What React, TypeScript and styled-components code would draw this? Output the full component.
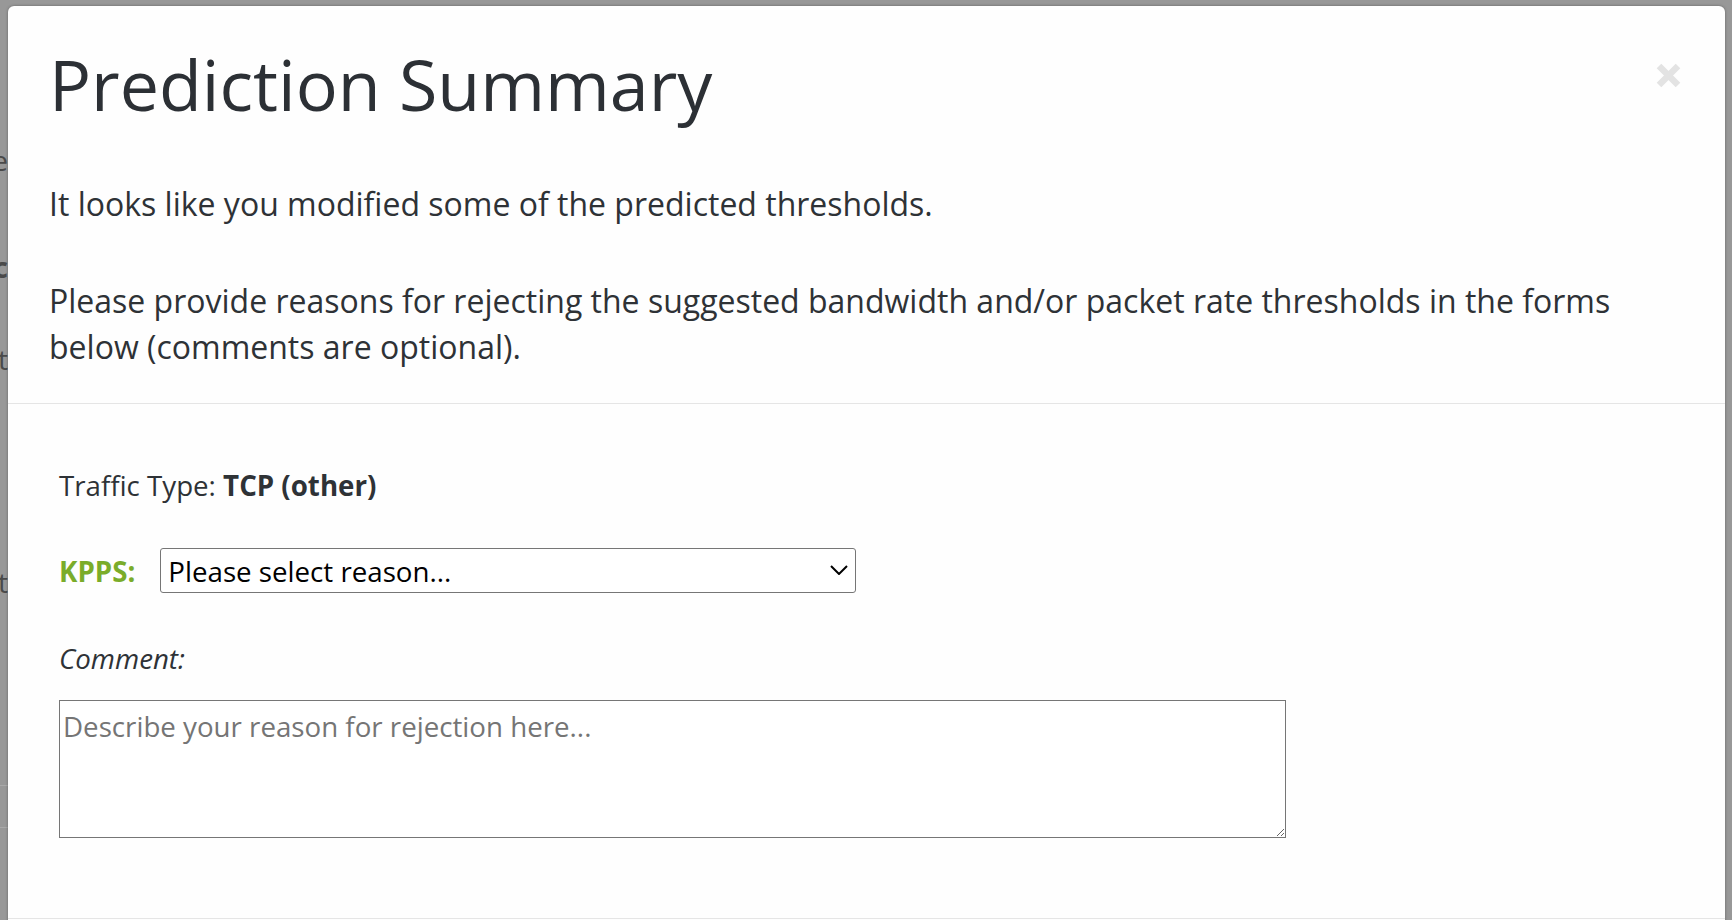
import React from "react";
import styled, { createGlobalStyle } from "styled-components";

const GlobalStyle = createGlobalStyle`
  html, body {
    margin: 0;
    padding: 0;
    height: 920px;
    overflow: hidden;
    background: #989898;
    font-family: "Open Sans", "Noto Sans", sans-serif;
  }
  * { box-sizing: border-box; }
`;

const Backdrop = styled.div`
  display: flex;
  align-items: flex-start;
  height: 920px;
  padding-top: 6px;
  background: #989898;
  overflow: hidden;
`;

const PageEdge = styled.div`
  width: 8px;
  flex: none;
  align-self: stretch;
  margin-top: -6px;
  display: flex;
  flex-direction: column;
  overflow: hidden;
  font-size: 28px;
  line-height: 40px;
  color: #4a4a4a;
`;

const EdgeGlyph = styled.div<{ $top: number; $bold?: boolean }>`
  margin-top: ${(p) => p.$top}px;
  height: 40px;
  white-space: nowrap;
  text-align: right;
  direction: rtl;
  font-weight: ${(p) => (p.$bold ? 700 : 400)};
`;

const EdgeRule = styled.div<{ $top: number }>`
  margin-top: ${(p) => p.$top}px;
  height: 1px;
  background: #a9a9a9;
`;

const Modal = styled.div`
  width: 1717px;
  flex: none;
  height: 930px;
  background: #fefefe;
  border-radius: 6px 6px 0 0;
  box-shadow: 0 0 3px rgba(0, 0, 0, 0.35);
  display: flex;
  flex-direction: column;
  color: #2e3236;
`;

const Header = styled.header`
  padding: 40px 42px 33.5px 41px;
  border-bottom: 1px solid #e5e5e5;
`;

const TitleRow = styled.div`
  display: flex;
  justify-content: space-between;
  align-items: flex-start;
`;

const Title = styled.h1`
  margin: 0;
  font-size: 70px;
  font-weight: 400;
  line-height: 1.1;
  color: #2c3035;
`;

const CloseButton = styled.button`
  border: 0;
  background: none;
  padding: 0;
  margin: 17px 2px 0 0;
  width: 25px;
  height: 25px;
  display: flex;
  cursor: pointer;
`;

const Intro = styled.p<{ $gap: number }>`
  margin: ${(p) => p.$gap}px 0 0 0;
  font-size: 32px;
  line-height: 46px;
`;

const Body = styled.section`
  padding: 61px 51px 80px 51px;
  display: flex;
  flex-direction: column;
  align-items: flex-start;
`;

const TypeLine = styled.div`
  font-size: 27.7px;
  line-height: 40px;
  strong { font-weight: 700; }
`;

const ReasonRow = styled.div`
  margin-top: 43px;
  display: flex;
  align-items: center;
  gap: 25px;
`;

const RateLabel = styled.label`
  font-size: 27.7px;
  line-height: 40px;
  font-weight: 700;
  color: #7aac2a;
`;

const SelectWrap = styled.div`
  position: relative;
  display: flex;
`;

const ReasonSelect = styled.select`
  appearance: none;
  -webkit-appearance: none;
  width: 696px;
  height: 45px;
  border: 1px solid #767676;
  border-radius: 3px;
  background: #fff;
  color: #000;
  font-family: "Open Sans", "Noto Sans", sans-serif;
  font-size: 27.7px;
  padding: 0 40px 0 7px;
  outline: none;
`;

const Chevron = styled.svg`
  position: absolute;
  right: 8px;
  top: 17px;
  pointer-events: none;
`;

const CommentLabel = styled.div`
  margin-top: 45px;
  font-size: 27.7px;
  line-height: 40px;
  font-style: italic;
`;

const CommentBox = styled.textarea`
  margin-top: 22px;
  width: 1227px;
  height: 138px;
  border: 1px solid #767676;
  border-radius: 0;
  padding: 5px 3px;
  font-family: "Open Sans", "Noto Sans", sans-serif;
  font-size: 27.7px;
  line-height: 40px;
  color: #000;
  background: #fff;
  outline: none;
  &::placeholder { color: #757575; }
`;

const Footer = styled.footer`
  border-top: 1px solid #e5e5e5;
  height: 20px;
`;

export default function App() {
  return (
    <>
      <GlobalStyle />
      <Backdrop>
        <PageEdge aria-hidden>
          <EdgeGlyph $top={140}>Scheduled update</EdgeGlyph>
          <EdgeGlyph $top={67} $bold>Traffic</EdgeGlyph>
          <EdgeGlyph $top={52}>Last</EdgeGlyph>
          <EdgeGlyph $top={183}>First</EdgeGlyph>
          <EdgeRule $top={183} />
          <EdgeRule $top={41} />
        </PageEdge>
        <Modal role="dialog" aria-labelledby="prediction-title">
          <Header>
            <TitleRow>
              <Title id="prediction-title">Prediction Summary</Title>
              <CloseButton aria-label="Close">
                <svg width="25" height="25" viewBox="0 0 25 25">
                  <path
                    d="M3 3 L22 22 M22 3 L3 22"
                    stroke="#e3e3e3"
                    strokeWidth="6.5"
                    fill="none"
                  />
                </svg>
              </CloseButton>
            </TitleRow>
            <Intro $gap={57.5}>It looks like you modified some of the predicted thresholds.</Intro>
            <Intro $gap={51}>
              Please provide reasons for rejecting the suggested bandwidth and/or packet rate
              thresholds in the forms below (comments are optional).
            </Intro>
          </Header>
          <Body>
            <TypeLine>
              Traffic Type: <strong>TCP (other)</strong>
            </TypeLine>
            <ReasonRow>
              <RateLabel htmlFor="kpps-reason">KPPS:</RateLabel>
              <SelectWrap>
                <ReasonSelect id="kpps-reason" defaultValue="">
                  <option value="">Please select reason...</option>
                  <option value="attack">Traffic spike was an attack</option>
                  <option value="expected">Expected growth</option>
                  <option value="other">Other</option>
                </ReasonSelect>
                <Chevron width="18" height="10" viewBox="0 0 18 10">
                  <path d="M1 1 L9 9 L17 1" stroke="#000" strokeWidth="2" fill="none" />
                </Chevron>
              </SelectWrap>
            </ReasonRow>
            <CommentLabel>Comment:</CommentLabel>
            <CommentBox placeholder="Describe your reason for rejection here..." />
          </Body>
          <Footer />
        </Modal>
      </Backdrop>
    </>
  );
}
